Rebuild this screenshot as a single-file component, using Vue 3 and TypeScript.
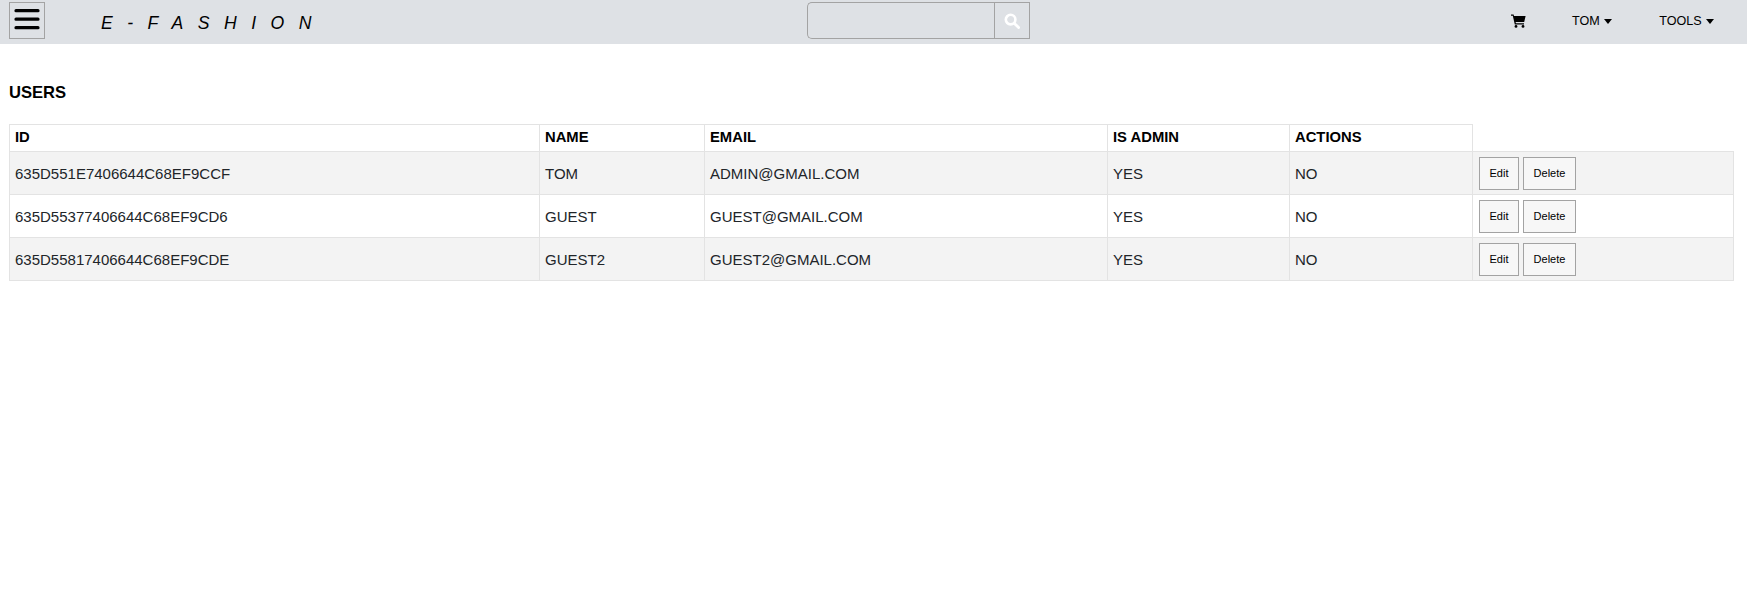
<script setup lang="ts">
interface User { id: string; name: string; email: string; admin: string; actions: string }
const users: User[] = [
  { id: '635D551E7406644C68EF9CCF', name: 'TOM', email: 'ADMIN@GMAIL.COM', admin: 'YES', actions: 'NO' },
  { id: '635D55377406644C68EF9CD6', name: 'GUEST', email: 'GUEST@GMAIL.COM', admin: 'YES', actions: 'NO' },
  { id: '635D55817406644C68EF9CDE', name: 'GUEST2', email: 'GUEST2@GMAIL.COM', admin: 'YES', actions: 'NO' },
]
const widths = [530, 165, 403, 182, 183, 261]
</script>

<template>
  <div class="page">
    <header class="nav">
      <button class="burger" aria-label="Menu">
        <svg class="burger-icon" width="26" height="26" viewBox="0 0 26 26">
          <path d="M2 4.7H24M2 13.2H24M2 21.7H24" stroke="#000" stroke-width="3.2" stroke-linecap="round" fill="none" />
        </svg>
      </button>
      <div class="brand">E-FASHION</div>
      <form class="search" @submit.prevent>
        <input class="search-input" type="text" />
        <button class="search-btn" aria-label="Search">
          <svg width="16" height="16" viewBox="0 0 16 16">
            <circle cx="6.6" cy="6.6" r="4.8" fill="none" stroke="#fff" stroke-width="2.6" />
            <path d="M10.2 10.2L14.6 14.6" stroke="#fff" stroke-width="2.8" stroke-linecap="round" />
          </svg>
        </button>
      </form>
      <svg class="cart" width="15" height="14" viewBox="0 0 15 14">
        <path d="M0 0.5H2.6L3 2H14.6L13.2 8H4.6L4.9 9.3H13V10.5H3.8L1.8 1.7H0Z" fill="#000" />
        <circle cx="5" cy="12.4" r="1.4" fill="#000" />
        <circle cx="12" cy="12.4" r="1.4" fill="#000" />
      </svg>
      <a class="menu menu-tom">TOM <i class="caret"></i></a>
      <a class="menu menu-tools">TOOLS <i class="caret"></i></a>
    </header>

    <main class="content">
      <h1 class="title">USERS</h1>
      <table class="table">
        <colgroup>
          <col v-for="(w, i) in widths" :key="i" :style="{ width: w + 'px' }" />
        </colgroup>
        <thead>
          <tr>
            <th>ID</th>
            <th>NAME</th>
            <th>EMAIL</th>
            <th>IS ADMIN</th>
            <th>ACTIONS</th>
          </tr>
        </thead>
        <tbody>
          <tr v-for="u in users" :key="u.id">
            <td>{{ u.id }}</td>
            <td>{{ u.name }}</td>
            <td>{{ u.email }}</td>
            <td>{{ u.admin }}</td>
            <td>{{ u.actions }}</td>
            <td class="btns">
              <button class="act edit">Edit</button>
              <button class="act del">Delete</button>
            </td>
          </tr>
        </tbody>
      </table>
    </main>
  </div>
</template>

<style scoped>
.page {
  font-family: "Liberation Sans", Arial, sans-serif;
  color: #000;
  background: #fff;
  min-height: 607px;
}
.nav {
  height: 44px;
  background: #dee1e5;
  display: flex;
  align-items: center;
  box-sizing: border-box;
  padding: 2px 0 5px 9px;
}
.burger {
  width: 36px;
  height: 37px;
  box-sizing: border-box;
  border: 1px solid #a3a3a3;
  background: transparent;
  padding: 0;
  display: flex;
  align-items: center;
  justify-content: center;
}
.burger-icon {
  margin-top: -4px;
}
.brand {
  margin-left: 56px;
  margin-top: 5px;
  width: 300px;
  font-size: 17.6px;
  font-style: italic;
  letter-spacing: 14.5px;
  white-space: nowrap;
}
.search {
  margin-left: 406px;
  display: flex;
  width: 223px;
  height: 37px;
}
.search-input {
  width: 187px;
  height: 37px;
  box-sizing: border-box;
  background: transparent;
  border: 1px solid #a3a3a3;
  border-right: 0;
  border-radius: 5px 0 0 5px;
  padding: 0;
  outline: none;
}
.search-btn {
  width: 36px;
  height: 37px;
  box-sizing: border-box;
  background: transparent;
  border: 1px solid #a3a3a3;
  padding: 0;
  display: flex;
  align-items: center;
  justify-content: center;
}
.cart {
  margin-left: 481px;
}
.menu {
  font-size: 12.6px;
  white-space: nowrap;
}
.menu-tom {
  margin-left: 46px;
}
.menu-tools {
  margin-left: 47px;
}
.caret {
  display: inline-block;
  width: 0;
  height: 0;
  margin-left: 1px;
  border-left: 4.5px solid transparent;
  border-right: 4.5px solid transparent;
  border-top: 5px solid #000;
  vertical-align: 1px;
}
.content {
  padding: 0 9px;
}
.title {
  margin: 0;
  padding-top: 37px;
  font-size: 16.6px;
  line-height: 24px;
  font-weight: 700;
}
.table {
  margin-top: 19px;
  width: 1724px;
  table-layout: fixed;
  border-collapse: collapse;
  font-size: 15px;
}
.table th {
  text-align: left;
  height: 27px;
  padding: 0 5px 2px;
  border: 1px solid #e3e3e3;
  font-size: 14.8px;
  font-weight: 700;
  box-sizing: border-box;
}
.table td {
  height: 43px;
  padding: 1px 5px 0;
  border: 1px solid #e3e3e3;
  box-sizing: border-box;
  color: #212529;
}
.table tbody tr:nth-child(odd) {
  background: #f3f3f3;
}
.table td.btns {
  padding: 0 5px 0 6px;
}
.act {
  height: 33px;
  box-sizing: border-box;
  border: 1px solid #a3a3a3;
  background: #f7f7f7;
  color: #000;
  font-family: "Liberation Sans", Arial, sans-serif;
  font-size: 11px;
  padding: 0;
  vertical-align: middle;
}
.edit {
  width: 40px;
}
.del {
  width: 53px;
  margin-left: 4px;
}
</style>
